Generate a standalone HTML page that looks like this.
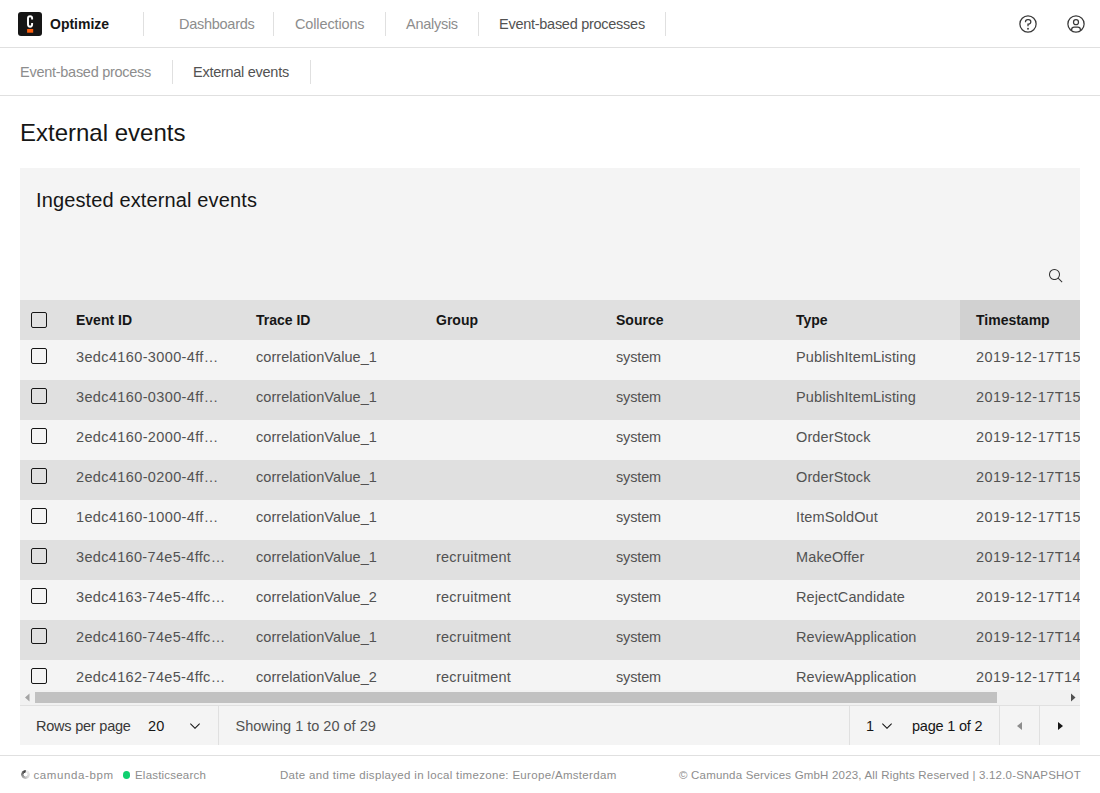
<!DOCTYPE html>
<html><head><meta charset="utf-8">
<style>
*{box-sizing:border-box;margin:0;padding:0}
html,body{width:1100px;height:793px;overflow:hidden;background:#fff}
body{font-family:"Liberation Sans",sans-serif;font-size:14px;color:#161616;position:relative}
.a{position:absolute;white-space:nowrap;line-height:16px}
.hdr{position:absolute;left:0;top:0;width:1100px;height:48px;border-bottom:1px solid #e0e0e0}
.sub{position:absolute;left:0;top:48px;width:1100px;height:48px;border-bottom:1px solid #e0e0e0}
.vs{position:absolute;width:1px;height:24px;background:#e0e0e0}
.nav{color:#8d8d8d}
.n2{font-size:14.5px;letter-spacing:-.27px}
.panel{position:absolute;left:20px;top:168px;width:1060px;height:577px;background:#f4f4f4;overflow:hidden}
.row{position:absolute;left:0;width:1060px;height:40px}
.row.z{background:#e0e0e0}
.cb{position:absolute;left:11px;width:16px;height:16px;border:1px solid #161616;border-radius:2px}
.td{position:absolute;color:#525252;line-height:16px;white-space:nowrap;font-size:14.5px}
.c0{letter-spacing:.37px}
.c0b{letter-spacing:.33px}
.c1{letter-spacing:.06px}
.c2{letter-spacing:.23px}
.c3{letter-spacing:-.15px}
.c4{letter-spacing:.12px}
.c5{letter-spacing:.45px}
.th{position:absolute;font-weight:700;line-height:16px;white-space:nowrap}
.ft{position:absolute;font-size:11.5px;color:#8d8d8d;line-height:14px;white-space:nowrap}
.ps{position:absolute;width:1px;background:#e0e0e0}
svg{position:absolute;overflow:visible}
</style></head><body>

<!-- top header -->
<div class="hdr"></div>
<svg style="left:0;top:0" width="60" height="48">
  <rect x="18" y="12" width="24" height="24" rx="3" fill="#161616"/>
  <path d="M32.1 19.6V18.3Q32.1 16.2 30.1 16.2Q28.0 16.2 28.0 18.3V24.6Q28.0 26.7 30.1 26.7Q32.1 26.7 32.1 24.6V22.9" fill="none" stroke="#fff" stroke-width="1.95"/>
  <rect x="27.1" y="29" width="6.1" height="3.7" fill="#fc5d0d"/>
</svg>
<div class="a" style="left:50px;top:16px;font-weight:700">Optimize</div>
<div class="vs" style="left:143px;top:12px"></div>
<div class="a nav n2" style="left:179px;top:16px">Dashboards</div>
<div class="vs" style="left:273px;top:12px"></div>
<div class="a nav n2" style="left:295px;top:16px;letter-spacing:-.13px">Collections</div>
<div class="vs" style="left:385px;top:12px"></div>
<div class="a nav n2" style="left:406px;top:16px">Analysis</div>
<div class="vs" style="left:478px;top:12px"></div>
<div class="a n2" style="left:499px;top:16px;color:#525252">Event-based processes</div>
<div class="vs" style="left:665px;top:12px"></div>

<svg style="left:1018px;top:14px" width="20" height="20" viewBox="0 0 32 32" fill="#393939">
  <path d="M16 2a14 14 0 1 0 14 14A14 14 0 0 0 16 2Zm0 26a12 12 0 1 1 12-12 12 12 0 0 1-12 12Z"/>
  <circle cx="16" cy="23.5" r="1.5"/>
  <path d="M17 8h-1.5a4.49 4.49 0 0 0-4.5 4.5v.5h2v-.5a2.5 2.5 0 0 1 2.5-2.5H17a2.5 2.5 0 0 1 0 5h-2v4.5h2V17a4.5 4.5 0 0 0 0-9Z"/>
</svg>
<svg style="left:1066px;top:14px" width="20" height="20" viewBox="0 0 32 32" fill="#393939">
  <path d="M16 8a5 5 0 1 0 5 5 5 5 0 0 0-5-5zm0 8a3 3 0 1 1 3-3 3 3 0 0 1-3 3z"/>
  <path d="M16 2a14 14 0 1 0 14 14A14.016 14.016 0 0 0 16 2zm-6 24.377V25a3.003 3.003 0 0 1 3-3h6a3.003 3.003 0 0 1 3 3v1.377a11.899 11.899 0 0 1-12 0zm13.992-1.451A5.002 5.002 0 0 0 19 20h-6a5.002 5.002 0 0 0-4.992 4.926 12 12 0 1 1 15.985 0z"/>
</svg>

<!-- sub header -->
<div class="sub"></div>
<div class="a nav n2" style="left:20px;top:64px">Event-based process</div>
<div class="vs" style="left:172px;top:60px"></div>
<div class="a n2" style="left:193px;top:64px;color:#525252">External events</div>
<div class="vs" style="left:310px;top:60px"></div>

<div class="a" style="left:20px;top:119px;font-size:24px;line-height:28px">External events</div>

<div class="panel">
  <div class="a" style="left:16px;top:20px;font-size:20px;line-height:24px;letter-spacing:.13px">Ingested external events</div>
  <svg style="left:1028px;top:100px" width="16" height="16" viewBox="0 0 32 32" fill="#333">
    <path d="M29 27.5859l-7.5521-7.5521a11.0177 11.0177 0 1 0-1.4141 1.4141L27.5859 29ZM4 13a9 9 0 1 1 9 9A9.01 9.01 0 0 1 4 13Z"/>
  </svg>
<div class="row" style="top:132px;background:#e0e0e0"></div>
<div class="row" style="top:132px;left:940px;width:120px;background:#d1d1d1"></div>
<div class="cb" style="top:144px"></div>
<div class="th" style="left:56px;top:144px">Event ID</div>
<div class="th" style="left:236px;top:144px">Trace ID</div>
<div class="th" style="left:416px;top:144px">Group</div>
<div class="th" style="left:596px;top:144px">Source</div>
<div class="th" style="left:776px;top:144px">Type</div>
<div class="th" style="left:956px;top:144px">Timestamp</div>
<div class="row" style="top:172px"></div>
<div class="cb" style="top:180px"></div>
<div class="td c0" style="left:56px;top:181px">3edc4160-3000-4ff…</div>
<div class="td c1" style="left:236px;top:181px">correlationValue_1</div>
<div class="td c3" style="left:596px;top:181px">system</div>
<div class="td c4" style="left:776px;top:181px">PublishItemListing</div>
<div class="td c5" style="left:956px;top:181px">2019-12-17T15:52:02.330+0100</div>
<div class="row z" style="top:212px"></div>
<div class="cb" style="top:220px"></div>
<div class="td c0" style="left:56px;top:221px">3edc4160-0300-4ff…</div>
<div class="td c1" style="left:236px;top:221px">correlationValue_1</div>
<div class="td c3" style="left:596px;top:221px">system</div>
<div class="td c4" style="left:776px;top:221px">PublishItemListing</div>
<div class="td c5" style="left:956px;top:221px">2019-12-17T15:52:02.330+0100</div>
<div class="row" style="top:252px"></div>
<div class="cb" style="top:260px"></div>
<div class="td c0" style="left:56px;top:261px">2edc4160-2000-4ff…</div>
<div class="td c1" style="left:236px;top:261px">correlationValue_1</div>
<div class="td c3" style="left:596px;top:261px">system</div>
<div class="td c4" style="left:776px;top:261px">OrderStock</div>
<div class="td c5" style="left:956px;top:261px">2019-12-17T15:52:02.330+0100</div>
<div class="row z" style="top:292px"></div>
<div class="cb" style="top:300px"></div>
<div class="td c0" style="left:56px;top:301px">2edc4160-0200-4ff…</div>
<div class="td c1" style="left:236px;top:301px">correlationValue_1</div>
<div class="td c3" style="left:596px;top:301px">system</div>
<div class="td c4" style="left:776px;top:301px">OrderStock</div>
<div class="td c5" style="left:956px;top:301px">2019-12-17T15:52:02.330+0100</div>
<div class="row" style="top:332px"></div>
<div class="cb" style="top:340px"></div>
<div class="td c0" style="left:56px;top:341px">1edc4160-1000-4ff…</div>
<div class="td c1" style="left:236px;top:341px">correlationValue_1</div>
<div class="td c3" style="left:596px;top:341px">system</div>
<div class="td c4" style="left:776px;top:341px">ItemSoldOut</div>
<div class="td c5" style="left:956px;top:341px">2019-12-17T15:52:02.330+0100</div>
<div class="row z" style="top:372px"></div>
<div class="cb" style="top:380px"></div>
<div class="td c0 c0b" style="left:56px;top:381px">3edc4160-74e5-4ffc…</div>
<div class="td c1" style="left:236px;top:381px">correlationValue_1</div>
<div class="td c2" style="left:416px;top:381px">recruitment</div>
<div class="td c3" style="left:596px;top:381px">system</div>
<div class="td c4" style="left:776px;top:381px">MakeOffer</div>
<div class="td c5" style="left:956px;top:381px">2019-12-17T14:22:02.330+0100</div>
<div class="row" style="top:412px"></div>
<div class="cb" style="top:420px"></div>
<div class="td c0 c0b" style="left:56px;top:421px">3edc4163-74e5-4ffc…</div>
<div class="td c1" style="left:236px;top:421px">correlationValue_2</div>
<div class="td c2" style="left:416px;top:421px">recruitment</div>
<div class="td c3" style="left:596px;top:421px">system</div>
<div class="td c4" style="left:776px;top:421px">RejectCandidate</div>
<div class="td c5" style="left:956px;top:421px">2019-12-17T14:22:02.330+0100</div>
<div class="row z" style="top:452px"></div>
<div class="cb" style="top:460px"></div>
<div class="td c0 c0b" style="left:56px;top:461px">2edc4160-74e5-4ffc…</div>
<div class="td c1" style="left:236px;top:461px">correlationValue_1</div>
<div class="td c2" style="left:416px;top:461px">recruitment</div>
<div class="td c3" style="left:596px;top:461px">system</div>
<div class="td c4" style="left:776px;top:461px">ReviewApplication</div>
<div class="td c5" style="left:956px;top:461px">2019-12-17T14:22:02.330+0100</div>
<div class="row" style="top:492px"></div>
<div class="cb" style="top:500px"></div>
<div class="td c0 c0b" style="left:56px;top:501px">2edc4162-74e5-4ffc…</div>
<div class="td c1" style="left:236px;top:501px">correlationValue_2</div>
<div class="td c2" style="left:416px;top:501px">recruitment</div>
<div class="td c3" style="left:596px;top:501px">system</div>
<div class="td c4" style="left:776px;top:501px">ReviewApplication</div>
<div class="td c5" style="left:956px;top:501px">2019-12-17T14:22:02.330+0100</div>
  <!-- scrollbar -->
  <div style="position:absolute;left:0;top:522px;width:1060px;height:15px;background:#f1f1f1"></div>
  <div style="position:absolute;left:15px;top:524px;width:962px;height:11px;background:#c1c1c1"></div>
  <svg style="left:0;top:522px" width="15" height="15"><path d="M5 7.5L9.5 3.5V11.5Z" fill="#a3a3a3"/></svg>
  <svg style="left:1045px;top:522px" width="15" height="15"><path d="M10.5 7.5L6 3.5V11.5Z" fill="#505050"/></svg>

  <!-- pagination -->
  <div style="position:absolute;left:0;top:537px;width:1060px;height:1px;background:#e0e0e0"></div>
  <div class="a" style="left:16px;top:550px;color:#393939;font-size:14.5px;letter-spacing:-.22px">Rows per page</div>
  <div class="a" style="left:128px;top:550px;color:#161616;font-size:14.5px;letter-spacing:.2px">20</div>
  <svg style="left:167px;top:550px" width="16" height="16" viewBox="0 0 16 16"><path d="M8 11L3 6 3.7 5.3 8 9.6 12.3 5.3 13 6z" fill="#161616"/></svg>
  <div class="ps" style="left:198px;top:538px;height:39px"></div>
  <div class="a" style="left:215.5px;top:550px;color:#525252;font-size:14.5px;letter-spacing:0px">Showing 1 to 20 of 29</div>
  <div class="ps" style="left:829px;top:538px;height:39px"></div>
  <div class="a" style="left:846px;top:550px;color:#161616;font-size:14.5px">1</div>
  <svg style="left:859px;top:550px" width="16" height="16" viewBox="0 0 16 16"><path d="M8 11L3 6 3.7 5.3 8 9.6 12.3 5.3 13 6z" fill="#161616"/></svg>
  <div class="a" style="left:892px;top:550px;color:#161616;font-size:14.5px;letter-spacing:-.2px">page 1 of 2</div>
  <div class="ps" style="left:979px;top:538px;height:39px"></div>
  <div class="ps" style="left:1019px;top:538px;height:39px"></div>
  <svg style="left:992px;top:550px" width="16" height="16"><path d="M10 4L5 8 10 12z" fill="#8d8d8d"/></svg>
  <svg style="left:1033px;top:550px" width="16" height="16"><path d="M5 4L10 8 5 12z" fill="#161616"/></svg>
</div>

<!-- footer -->
<div style="position:absolute;left:0;top:755px;width:1100px;height:1px;background:#e0e0e0"></div>
<div style="position:absolute;left:20.5px;top:769.5px;width:9px;height:9px;border-radius:50%;background:conic-gradient(from 30deg,#ececec 0deg,#d6d6d6 110deg,#9a9a9a 210deg,#505050 300deg,#303030 328deg,#ececec 334deg);-webkit-mask:radial-gradient(circle,transparent 1.8px,#000 2.2px);mask:radial-gradient(circle,transparent 1.8px,#000 2.2px)"></div>
<div class="ft" style="left:33.5px;top:768px;letter-spacing:.6px">camunda-bpm</div>
<div style="position:absolute;left:122.5px;top:771px;width:7.5px;height:8px;border-radius:50%;background:#10d070"></div>
<div class="ft" style="left:135px;top:768px;letter-spacing:.2px">Elasticsearch</div>
<div class="ft" style="left:280px;top:768px;letter-spacing:.32px">Date and time displayed in local timezone: Europe/Amsterdam</div>
<div class="ft" style="left:679px;top:768px;letter-spacing:.19px">© Camunda Services GmbH 2023, All Rights Reserved | 3.12.0-SNAPSHOT</div>
</body></html>
